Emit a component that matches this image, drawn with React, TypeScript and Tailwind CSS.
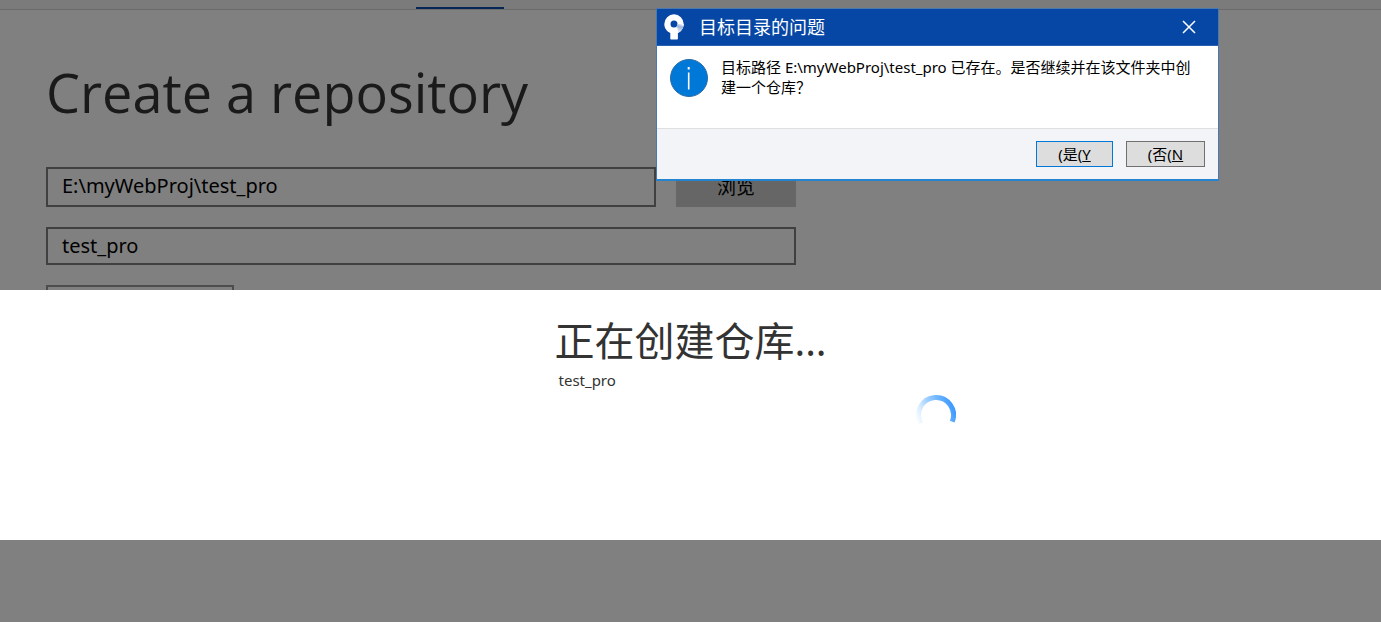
import { useState } from 'react'

const REPO_PATH = 'E:\\myWebProj\\test_pro'
const REPO_NAME = 'test_pro'

function SourcetreeLogo() {
  return (
    <svg viewBox="0 0 20 26" className="h-[26px] w-5" aria-hidden="true">
      <defs>
        <linearGradient
          id="logo-shade"
          gradientUnits="userSpaceOnUse"
          x1="16"
          y1="9"
          x2="12"
          y2="19"
        >
          <stop offset="0" stopColor="#ffffff" />
          <stop offset="0.3" stopColor="#9db4dc" />
          <stop offset="1" stopColor="#ffffff" />
        </linearGradient>
      </defs>
      <path
        fill="#ffffff"
        fillRule="evenodd"
        d="M10 .3a9.700 9.700 0 0 0-9.700 9.700c0 4 2.300 7.300 6 8.900V24.500c0 .6.4 1 1 1h5.600c.6 0 1-.4 1-1V18.900c3.600-1.600 5.800-4.900 5.800-8.900A9.700 9.700 0 0 0 10 .3zm0 6.200a3.500 3.500 0 1 1 0 7 3.500 3.500 0 0 1 0-7z"
      />
      <path
        fill="url(#logo-shade)"
        d="M13.500 10h6.200c0 4-2.200 7.300-5.800 8.900V16c0-1.500-.9-2.500-2-3 1-.6 1.600-1.700 1.600-3z"
      />
    </svg>
  )
}

function InfoIcon() {
  return (
    <svg viewBox="0 0 38 38" className="mt-px size-[38px] shrink-0" aria-hidden="true">
      <circle cx="19" cy="19" r="18.500" fill="#0078d7" stroke="#2b6ba8" />
      <path d="M17.700 8h2v2.400h-2zM17.900 13.500h1.600V30.500h-1.600z" fill="#ffffff" />
    </svg>
  )
}

function Spinner() {
  return (
    <svg viewBox="0 0 40 40" className="size-10" role="img" aria-label="Loading">
      <defs>
        <linearGradient
          id="spinner-fade"
          gradientUnits="userSpaceOnUse"
          x1="2"
          y1="31"
          x2="38"
          y2="16"
        >
          <stop offset="0" stopColor="#ffffff" />
          <stop offset="0.2" stopColor="#dceeff" />
          <stop offset="0.5" stopColor="#99ccff" />
          <stop offset="1" stopColor="#3f9bff" />
        </linearGradient>
      </defs>
      <path
        d="M4.700 29.500A17.500 17.500 0 1 1 36.200 27.600"
        fill="none"
        stroke="url(#spinner-fade)"
        strokeWidth="5"
      />
    </svg>
  )
}

function CreateForm() {
  const [path, setPath] = useState(REPO_PATH)
  const [name, setName] = useState(REPO_NAME)

  return (
    <main className="px-[46px] pt-[46px]">
      <h1 className="font-['Open_Sans',sans-serif] text-[54px] leading-[72px] text-[#1a1a1a]">
        Create a repository
      </h1>
      <form className="mt-[39px] flex max-w-[750px] flex-col gap-5 text-xl text-black">
        <div className="flex gap-5">
          <input
            aria-label="目标路径"
            value={path}
            onChange={(e) => setPath(e.target.value)}
            className="h-10 min-w-0 flex-1 border-2 border-[#404040] px-3.5 pb-1 outline-none"
          />
          <button type="button" className="h-10 w-[120px] bg-[#666666] text-[19px]">
            浏览
          </button>
        </div>
        <input
          aria-label="名称"
          value={name}
          onChange={(e) => setName(e.target.value)}
          className="h-[38px] border-2 border-[#404040] px-3.5 pb-0.5 outline-none"
        />
        <select aria-label="类型" className="h-10 w-[188px] border-2 border-[#4d4d4d] px-3">
          <option>Git</option>
        </select>
      </form>
    </main>
  )
}

function ProgressPanel() {
  return (
    <section className="absolute inset-x-0 top-[290px] flex h-[250px] justify-center bg-white pt-[23px] text-[#333333]">
      <div className="flex w-[530px] flex-col">
        <h2 className="text-center text-[40px] leading-[56px]">正在创建仓库...</h2>
        <p className="mt-px pl-[133px] text-[15px] leading-5">{REPO_NAME}</p>
        <div className="mt-1 self-end">
          <Spinner />
        </div>
      </div>
    </section>
  )
}

function ConfirmDialog() {
  return (
    <div
      role="dialog"
      aria-labelledby="dialog-title"
      className="absolute top-2 left-[656px] w-[563px] border border-b-2 border-[#4a78b0] border-b-[#2484cf] bg-white text-[15px] text-black"
    >
      <header className="flex h-[37px] items-center border-b border-[#2a62b4] bg-[#0647a6] pr-5 pl-[7px] text-white">
        <SourcetreeLogo />
        <h2 id="dialog-title" className="ml-[15px] flex-1 text-lg">
          目标目录的问题
        </h2>
        <button type="button" aria-label="关闭" className="p-0.5">
          <svg viewBox="0 0 14 14" className="size-3.5" stroke="#ffffff" strokeWidth="1.500">
            <path d="M1 1L13 13M13 1L1 13" />
          </svg>
        </button>
      </header>
      <div className="flex h-[82px] gap-[13px] pt-3 pr-5 pl-[13px]">
        <InfoIcon />
        <p className="-mt-px leading-5">
          {`目标路径 ${REPO_PATH} 已存在。是否继续并在该文件夹中创建一个仓库？`}
        </p>
      </div>
      <footer className="flex h-[51px] items-center justify-end gap-[13px] border-t border-[#dfdfdf] bg-[#f2f4f7] pr-[13px]">
        <button type="button" className="h-[26px] w-[77px] border border-[#0078d7] bg-[#dddddd]">
          (是(<u>Y</u>
        </button>
        <button type="button" className="h-[26px] w-[79px] border border-[#707070] bg-[#dddddd]">
          (否(<u>N</u>
        </button>
      </footer>
    </div>
  )
}

export default function App() {
  return (
    <div className="relative min-h-screen bg-[#808080] font-['Noto_Sans','Noto_Sans_CJK_SC',sans-serif]">
      <nav className="flex h-2.5 items-end border-b border-[#6b6b6b] bg-[#7b7b7b] pl-[416px]">
        <span className="h-0.5 w-[88px] bg-[#032657]" />
      </nav>
      <CreateForm />
      <ProgressPanel />
      <ConfirmDialog />
    </div>
  )
}
